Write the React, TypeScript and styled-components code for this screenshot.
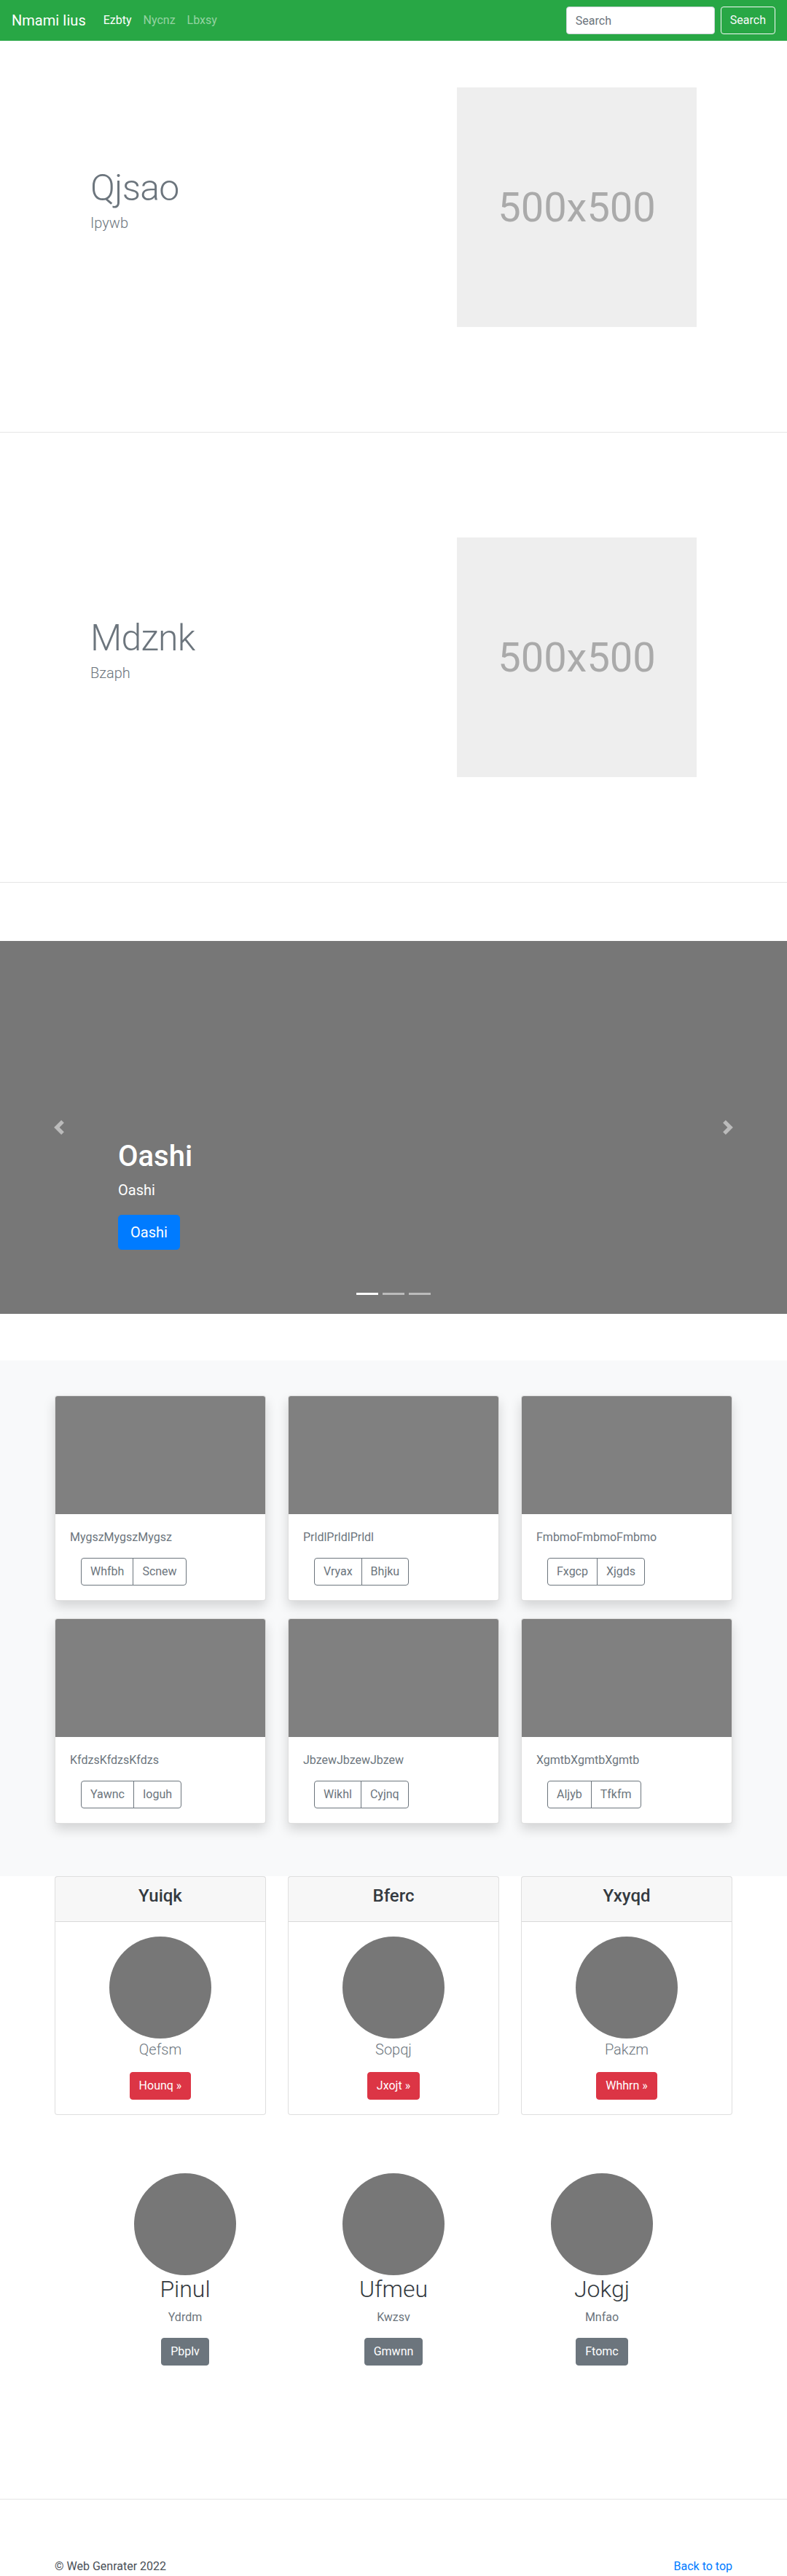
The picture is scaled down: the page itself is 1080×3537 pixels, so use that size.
import React from "react";
import styled, { createGlobalStyle } from "styled-components";

const GlobalStyle = createGlobalStyle`
  *, *::before, *::after { box-sizing: border-box; }
  html, body { margin: 0; padding: 0; }
  body {
    font-family: Roboto, "Helvetica Neue", Arial, "Noto Sans", sans-serif;
    font-size: 16px;
    line-height: 1.5;
    color: #212529;
    background: #fff;
  }
`;

/* ---------- Navbar ---------- */
const Navbar = styled.nav`
  display: flex;
  align-items: center;
  justify-content: space-between;
  height: 56px;
  padding: 8px 16px;
  background: #28a745;
`;
const NavLeft = styled.div`
  display: flex;
  align-items: center;
`;
const Brand = styled.a`
  font-size: 20px;
  line-height: 30px;
  padding: 5px 0;
  margin-right: 16px;
  color: #fff;
  text-decoration: none;
  white-space: nowrap;
`;
const NavList = styled.ul`
  display: flex;
  list-style: none;
  margin: 0;
  padding: 0;
`;
const NavLink = styled.a<{ $active?: boolean }>`
  display: block;
  padding: 8px;
  color: ${(p) => (p.$active ? "#fff" : "rgba(255,255,255,.5)")};
  text-decoration: none;
`;
const SearchForm = styled.form`
  display: flex;
  align-items: center;
`;
const SearchInput = styled.input`
  width: 204px;
  height: 38px;
  padding: 6px 12px;
  margin-right: 8px;
  font-family: inherit;
  font-size: 16px;
  color: #495057;
  background: #fff;
  border: 1px solid #ced4da;
  border-radius: 4px;
  &::placeholder { color: #6c757d; }
`;
const SearchButton = styled.button`
  height: 38px;
  padding: 6px 12px;
  font-family: inherit;
  font-size: 16px;
  line-height: 1.5;
  color: #f8f9fa;
  background: transparent;
  border: 1px solid #f8f9fa;
  border-radius: 4px;
`;

/* ---------- Featurettes ---------- */
const Featurette = styled.section`
  max-width: 960px;
  margin: 0 auto;
  display: grid;
  grid-template-columns: 1fr 457px;
  align-items: center;
`;
const FeatureText = styled.div`
  padding-left: 64px;
`;
const FeatureHeading = styled.h2`
  margin: 0 0 8px;
  font-size: 50px;
  font-weight: 300;
  line-height: 1;
  letter-spacing: -0.8px;
  color: #6c757d;
`;
const Lead = styled.p`
  margin: 0 0 16px;
  font-size: 20px;
  font-weight: 300;
  line-height: 1.5;
  color: #6c757d;
`;
const ImageCol = styled.div`
  padding: 64px;
`;
const Placeholder = styled.div`
  width: 329px;
  height: 329px;
  background: #eee;
  color: #aaa;
  display: flex;
  align-items: center;
  justify-content: center;
  font-size: 56px;
  font-weight: 400;
`;
const Divider = styled.hr`
  margin: 80px 0;
  height: 0;
  border: 0;
  border-top: 1px solid rgba(0, 0, 0, 0.1);
`;

/* ---------- Carousel ---------- */
const Carousel = styled.div`
  position: relative;
  height: 512px;
  margin-bottom: 64px;
  background: #777;
  overflow: hidden;
`;
const Caption = styled.div`
  position: absolute;
  left: 15%;
  right: 15%;
  bottom: 48px;
  padding: 20px 0;
  color: #fff;
  text-align: left;
`;
const CaptionTitle = styled.h1`
  margin: 0 0 8px;
  font-size: 40px;
  font-weight: 500;
  line-height: 1.2;
`;
const CaptionText = styled.p`
  margin: 0 0 20px;
  font-size: 20px;
  line-height: 1.4;
`;
const CaptionActions = styled.p`
  margin: 0 0 20px;
`;
const PrimaryLg = styled.a`
  display: inline-block;
  padding: 8px 16px;
  font-size: 20px;
  line-height: 1.5;
  color: #fff;
  background: #007bff;
  border: 1px solid #007bff;
  border-radius: 4.8px;
  text-decoration: none;
`;
const Control = styled.a<{ $side: "left" | "right" }>`
  position: absolute;
  top: 0;
  bottom: 0;
  ${(p) => p.$side}: 0;
  width: 15%;
  display: flex;
  align-items: center;
  justify-content: center;
  opacity: 0.5;
`;
const Indicators = styled.ol`
  position: absolute;
  left: 0;
  right: 0;
  bottom: 0;
  display: flex;
  justify-content: center;
  margin: 0 15% 16px;
  padding: 0;
  list-style: none;
`;
const Indicator = styled.li<{ $active?: boolean }>`
  box-sizing: content-box;
  width: 30px;
  height: 3px;
  margin: 0 3px;
  background-color: #fff;
  background-clip: padding-box;
  border-top: 10px solid transparent;
  border-bottom: 10px solid transparent;
  opacity: ${(p) => (p.$active ? 1 : 0.5)};
`;

/* ---------- Album ---------- */
const AlbumSection = styled.section`
  background: #f8f9fa;
  padding: 48px 0;
`;
const Container = styled.div`
  max-width: 960px;
  margin: 0 auto;
  padding: 0 15px;
`;
const ThreeGrid = styled.div`
  display: grid;
  grid-template-columns: repeat(3, 1fr);
  column-gap: 30px;
`;
const AlbumCard = styled.div`
  margin-bottom: 24px;
  background: #fff;
  border: 1px solid rgba(0, 0, 0, 0.125);
  border-radius: 4px;
  box-shadow: 0 8px 16px rgba(0, 0, 0, 0.15);
  overflow: hidden;
`;
const CardImage = styled.div`
  height: 162px;
  background: #808080;
`;
const CardBody = styled.div`
  padding: 20px;
`;
const CardText = styled.p`
  margin: 0 0 16px;
  color: #6c757d;
`;
const BtnGroup = styled.div`
  display: inline-flex;
  margin-left: 15px;
`;
const OutlineBtn = styled.button`
  height: 38px;
  padding: 6px 12px;
  font-family: inherit;
  font-size: 16px;
  line-height: 1.5;
  color: #6c757d;
  background: transparent;
  border: 1px solid #6c757d;
  border-radius: 0;
  &:first-child { border-radius: 4px 0 0 4px; }
  &:last-child { border-radius: 0 4px 4px 0; margin-left: -1px; }
`;

/* ---------- Pricing-like cards ---------- */
const PlanCard = styled.div`
  background: #fff;
  border: 1px solid rgba(0, 0, 0, 0.125);
  border-radius: 4px;
  text-align: center;
`;
const PlanHeader = styled.div`
  padding: 12px 20px;
  background: rgba(0, 0, 0, 0.03);
  border-bottom: 1px solid rgba(0, 0, 0, 0.125);
`;
const PlanTitle = styled.h4`
  margin: 0 0 8px;
  font-size: 24px;
  font-weight: 500;
  line-height: 1.2;
  color: #343a40;
`;
const PlanBody = styled.div`
  padding: 20px;
  display: flex;
  flex-direction: column;
  align-items: center;
`;
const Circle = styled.div`
  width: 140px;
  height: 140px;
  border-radius: 50%;
  background: #777;
  flex: none;
`;
const PlanName = styled.p`
  margin: 0 0 16px;
  font-size: 20px;
  font-weight: 300;
  line-height: 1.5;
  color: #6c757d;
`;
const SolidBtn = styled.a<{ $color: string }>`
  display: inline-block;
  padding: 6px 12px;
  font-size: 16px;
  line-height: 1.5;
  color: #fff;
  background: ${(p) => p.$color};
  border: 1px solid ${(p) => p.$color};
  border-radius: 4px;
  text-decoration: none;
`;

/* ---------- Team ---------- */
const TeamGrid = styled.section`
  max-width: 858px;
  margin: 80px auto 0;
  padding-bottom: 63px;
  display: grid;
  grid-template-columns: repeat(3, 1fr);
`;
const Member = styled.div`
  margin-bottom: 24px;
  display: flex;
  flex-direction: column;
  align-items: center;
  text-align: center;
`;
const MemberName = styled.h2`
  margin: 0 0 8px;
  font-size: 32px;
  font-weight: 300;
  line-height: 1.2;
  color: #343a40;
`;
const MemberRole = styled.p`
  margin: 0 0 16px;
  color: #6c757d;
`;
const MemberAction = styled.p`
  margin: 0 0 16px;
`;

/* ---------- Footer ---------- */
const Footer = styled.footer`
  max-width: 960px;
  margin: 0 auto;
  padding: 0 15px;
  display: flex;
  justify-content: space-between;
`;
const FooterText = styled.p`
  margin: 0;
  color: #495057;
`;
const FooterLink = styled.a`
  color: #007bff;
  text-decoration: none;
`;

const Chevron = ({ dir }: { dir: "prev" | "next" }) => (
  <svg width="20" height="20" viewBox="0 0 8 8" fill="#fff">
    <path
      d={
        dir === "prev"
          ? "M5.25 0l-4 4 4 4 1.5-1.5L4.25 4l2.5-2.5L5.25 0z"
          : "M2.75 0l-1.5 1.5L3.75 4l-2.5 2.5L2.75 8l4-4-4-4z"
      }
    />
  </svg>
);

const albums = [
  { text: "MygszMygszMygsz", a: "Whfbh", b: "Scnew" },
  { text: "PrldlPrldlPrldl", a: "Vryax", b: "Bhjku" },
  { text: "FmbmoFmbmoFmbmo", a: "Fxgcp", b: "Xjgds" },
  { text: "KfdzsKfdzsKfdzs", a: "Yawnc", b: "Ioguh" },
  { text: "JbzewJbzewJbzew", a: "Wikhl", b: "Cyjnq" },
  { text: "XgmtbXgmtbXgmtb", a: "Aljyb", b: "Tfkfm" },
];

const plans = [
  { title: "Yuiqk", name: "Qefsm", btn: "Hounq »" },
  { title: "Bferc", name: "Sopqj", btn: "Jxojt »" },
  { title: "Yxyqd", name: "Pakzm", btn: "Whhrn »" },
];

const team = [
  { name: "Pinul", role: "Ydrdm", btn: "Pbplv" },
  { name: "Ufmeu", role: "Kwzsv", btn: "Gmwnn" },
  { name: "Jokgj", role: "Mnfao", btn: "Ftomc" },
];

export default function App() {
  return (
    <>
      <GlobalStyle />
      <Navbar>
        <NavLeft>
          <Brand href="#">Nmami Iius</Brand>
          <NavList>
            <li><NavLink $active href="#">Ezbty</NavLink></li>
            <li><NavLink href="#">Nycnz</NavLink></li>
            <li><NavLink href="#">Lbxsy</NavLink></li>
          </NavList>
        </NavLeft>
        <SearchForm onSubmit={(e) => e.preventDefault()}>
          <SearchInput type="search" placeholder="Search" aria-label="Search" />
          <SearchButton type="submit">Search</SearchButton>
        </SearchForm>
      </Navbar>

      <Featurette>
        <FeatureText>
          <FeatureHeading>Qjsao</FeatureHeading>
          <Lead>Ipywb</Lead>
        </FeatureText>
        <ImageCol>
          <Placeholder>500x500</Placeholder>
        </ImageCol>
      </Featurette>

      <Divider />

      <Featurette>
        <FeatureText>
          <FeatureHeading>Mdznk</FeatureHeading>
          <Lead>Bzaph</Lead>
        </FeatureText>
        <ImageCol>
          <Placeholder>500x500</Placeholder>
        </ImageCol>
      </Featurette>

      <Divider />

      <Carousel>
        <Caption>
          <CaptionTitle>Oashi</CaptionTitle>
          <CaptionText>Oashi</CaptionText>
          <CaptionActions>
            <PrimaryLg href="#">Oashi</PrimaryLg>
          </CaptionActions>
        </Caption>
        <Control $side="left" href="#"><Chevron dir="prev" /></Control>
        <Control $side="right" href="#"><Chevron dir="next" /></Control>
        <Indicators>
          <Indicator $active />
          <Indicator />
          <Indicator />
        </Indicators>
      </Carousel>

      <AlbumSection>
        <Container>
          <ThreeGrid>
            {albums.map((c) => (
              <AlbumCard key={c.text}>
                <CardImage />
                <CardBody>
                  <CardText>{c.text}</CardText>
                  <BtnGroup>
                    <OutlineBtn type="button">{c.a}</OutlineBtn>
                    <OutlineBtn type="button">{c.b}</OutlineBtn>
                  </BtnGroup>
                </CardBody>
              </AlbumCard>
            ))}
          </ThreeGrid>
        </Container>
      </AlbumSection>

      <Container>
        <ThreeGrid>
          {plans.map((p) => (
            <PlanCard key={p.title}>
              <PlanHeader>
                <PlanTitle>{p.title}</PlanTitle>
              </PlanHeader>
              <PlanBody>
                <Circle />
                <PlanName>{p.name}</PlanName>
                <SolidBtn $color="#dc3545" href="#">{p.btn}</SolidBtn>
              </PlanBody>
            </PlanCard>
          ))}
        </ThreeGrid>
      </Container>

      <TeamGrid>
        {team.map((m) => (
          <Member key={m.name}>
            <Circle />
            <MemberName>{m.name}</MemberName>
            <MemberRole>{m.role}</MemberRole>
            <MemberAction>
              <SolidBtn $color="#6c757d" href="#">{m.btn}</SolidBtn>
            </MemberAction>
          </Member>
        ))}
      </TeamGrid>

      <Divider />

      <Footer>
        <FooterText>© Web Genrater 2022</FooterText>
        <FooterLink href="#">Back to top</FooterLink>
      </Footer>
    </>
  );
}
